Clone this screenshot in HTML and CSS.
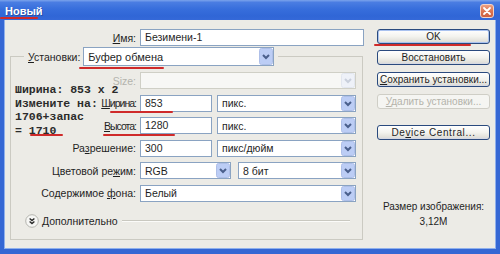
FILE: index.html
```html
<!DOCTYPE html>
<html lang="ru">
<head>
<meta charset="utf-8">
<title>Новый</title>
<link rel="stylesheet" href="styles.css">
</head>
<body>
<div class="window">
  <div class="titlebar">
    <span class="title">Новый</span>
    <span class="close"><svg width="14" height="14" viewBox="0 0 14 14"><path d="M4 4 L10 10 M10 4 L4 10" stroke="#fff" stroke-width="1.8" stroke-linecap="round"/></svg></span>
  </div>
  <div class="frame">
    <div class="content">
      <div class="main">
        <div class="name-row">
          <span class="lbl name-lbl"><u>И</u>мя:</span>
          <div class="field name-field">Безимени-1</div>
        </div>
        <fieldset class="group">
          <legend class="preset">
            <span class="lbl"><u>У</u>становки:</span>
            <div class="combo preset-combo"><span class="val">Буфер обмена</span><span class="arrow"><svg width="14" height="17" viewBox="0 0 14 17"><rect x="0.5" y="0.5" width="13" height="16" rx="2" fill="#bccdf5" stroke="#aebfe8"/><path d="M4 7 L7 10 L10 7" fill="none" stroke="#4a5f8c" stroke-width="2"/></svg></span></div>
          </legend>
          <div class="grid">
            <span class="lbl dim">Size:</span>
            <div class="combo disabled"><span class="val"></span><span class="arrow"><svg width="14" height="15" viewBox="0 0 14 15"><rect x="0.5" y="0.5" width="13" height="14" rx="2" fill="#eef1f8" stroke="#e2e6ef"/><path d="M4 6 L7 9 L10 6" fill="none" stroke="#c9cfdc" stroke-width="2"/></svg></span></div>

            <span class="lbl tight"><u>Ш</u>ирина:</span>
            <div class="pair">
              <div class="field num">853</div>
              <div class="combo unit"><span class="val">пикс.</span><span class="arrow"><svg width="14" height="15" viewBox="0 0 14 15"><rect x="0.5" y="0.5" width="13" height="14" rx="2" fill="#bccdf5" stroke="#aebfe8"/><path d="M4 6 L7 9 L10 6" fill="none" stroke="#4a5f8c" stroke-width="2"/></svg></span></div>
            </div>

            <span class="lbl tight"><u>В</u>ысота:</span>
            <div class="pair">
              <div class="field num">1280</div>
              <div class="combo unit"><span class="val">пикс.</span><span class="arrow"><svg width="14" height="15" viewBox="0 0 14 15"><rect x="0.5" y="0.5" width="13" height="14" rx="2" fill="#bccdf5" stroke="#aebfe8"/><path d="M4 6 L7 9 L10 6" fill="none" stroke="#4a5f8c" stroke-width="2"/></svg></span></div>
            </div>

            <span class="lbl">Ра<u>з</u>решение:</span>
            <div class="pair">
              <div class="field num">300</div>
              <div class="combo unit"><span class="val">пикс/дюйм</span><span class="arrow"><svg width="14" height="15" viewBox="0 0 14 15"><rect x="0.5" y="0.5" width="13" height="14" rx="2" fill="#bccdf5" stroke="#aebfe8"/><path d="M4 6 L7 9 L10 6" fill="none" stroke="#4a5f8c" stroke-width="2"/></svg></span></div>
            </div>

            <span class="lbl">Цветовой ре<u>ж</u>им:</span>
            <div class="pair wide-gap">
              <div class="combo mode"><span class="val">RGB</span><span class="arrow"><svg width="14" height="15" viewBox="0 0 14 15"><rect x="0.5" y="0.5" width="13" height="14" rx="2" fill="#bccdf5" stroke="#aebfe8"/><path d="M4 6 L7 9 L10 6" fill="none" stroke="#4a5f8c" stroke-width="2"/></svg></span></div>
              <div class="combo unit"><span class="val">8 бит</span><span class="arrow"><svg width="14" height="15" viewBox="0 0 14 15"><rect x="0.5" y="0.5" width="13" height="14" rx="2" fill="#bccdf5" stroke="#aebfe8"/><path d="M4 6 L7 9 L10 6" fill="none" stroke="#4a5f8c" stroke-width="2"/></svg></span></div>
            </div>

            <span class="lbl">Содержимое <u>ф</u>она:</span>
            <div class="combo"><span class="val">Белый</span><span class="arrow"><svg width="14" height="15" viewBox="0 0 14 15"><rect x="0.5" y="0.5" width="13" height="14" rx="2" fill="#bccdf5" stroke="#aebfe8"/><path d="M4 6 L7 9 L10 6" fill="none" stroke="#4a5f8c" stroke-width="2"/></svg></span></div>
          </div>
          <div class="advanced">
            <svg class="adv-icon" width="14" height="14" viewBox="0 0 14 14"><circle cx="7" cy="7" r="6.3" fill="#f6f6f4" stroke="#b4b4ae"/><path d="M4.6 4.4 L7 6.6 L9.4 4.4 M4.6 7.4 L7 9.6 L9.4 7.4" fill="none" stroke="#2a2a2a" stroke-width="1.3"/></svg>
            <span class="adv-text">Дополнительно</span>
            <span class="adv-line"></span>
          </div>
        </fieldset>
      </div>
      <div class="side">
        <div class="btn default">OK</div>
        <div class="btn b-restore">Восстановить</div>
        <div class="btn b-save"><u>С</u>охранить установки...</div>
        <div class="btn b-del disabled"><u>У</u>далить установки...</div>
        <div class="btn b-device">De<u>v</u>ice Central...</div>
        <div class="info">
          <div>Размер изображения:</div>
          <div>3,12M</div>
        </div>
      </div>
    </div>
  </div>
  <div class="notes">Ширина: 853 x 2<br>Измените на:<br>1706+запас<br>= 1710</div>
  <i class="mark m-title"></i>
  <i class="mark m-preset"></i>
  <i class="mark m-ok"></i>
  <i class="mark m-width"></i>
  <i class="mark m-height"></i>
  <i class="mark m-1710"></i>
</div>
</body>
</html>
```
FILE: styles.css
```css
* { box-sizing: border-box; }
html, body { margin: 0; padding: 0; }
body {
  width: 500px; height: 254px; overflow: hidden;
  font-family: "Liberation Sans", Arial, sans-serif;
  font-size: 10.5px; color: #1f1f1f;
  background: #ecebe6;
}
u { text-decoration: underline; text-underline-offset: 1px; }

.window {
  position: relative;
  width: 500px; height: 254px;
  display: flex; flex-direction: column;
  background: #ecebe6;
}

.titlebar {
  height: 20px; flex: none;
  display: flex; align-items: center; justify-content: space-between;
  padding: 0 6px 0 5px;
  background: linear-gradient(#7ba3ec 0%, #4a7de2 12%, #376edc 45%, #3066d6 80%, #3569d8 100%);
}
.title {
  color: #fff; font-weight: bold; font-size: 11px;
  text-shadow: 1px 1px 0 #2a4fa5;
  padding-top: 2px;
}
.close {
  width: 14px; height: 14px; margin-top: 2px;
  border: 1px solid #f3d2c6; border-radius: 3px;
  background: linear-gradient(#eca083, #dc7552 50%, #cc5f40);
  display: flex; align-items: center; justify-content: center;
}
.close svg { display: block; margin: -1px; }

.frame {
  flex: 1;
  border: solid #3567d4;
  border-width: 0 4px 5px 4px;
  box-shadow: inset 1px 0 0 #8fb0ec, inset -1px 0 0 #8fb0ec, inset 0 -1px 0 #8fb0ec;
}
.content {
  display: flex; gap: 13px;
  padding: 9px 6px 0 6px;
}

.main { width: 354px; flex: none; }
.lbl { text-align: right; white-space: nowrap; }
.lbl.tight { letter-spacing: -1px; }
.dim { color: #b3b3ad; }

.name-row { display: flex; gap: 4px; height: 17px; align-items: center; }
.name-lbl { width: 126px; }

.field {
  height: 17px; background: #fff;
  border: 1px solid #8aa3c2;
  padding: 0 4px; line-height: 15px; white-space: nowrap;
}
.name-field { width: 224px; }
.num { width: 72px; flex: none; }

.combo {
  height: 17px; background: #fff;
  border: 1px solid #8aa3c2;
  display: flex; align-items: center; justify-content: space-between;
  padding-left: 4px; white-space: nowrap;
}
.combo .arrow { display: flex; }
.combo .arrow svg { display: block; }
.combo.disabled { background: #f7f7f5; border-color: #cfcfc6; }

.group {
  margin: 1px 0 0 0;
  width: 353px; min-width: 0;
  border: 1px solid #cbcac2;
  padding: 6px 6px 10px 13px;
}
.preset {
  padding: 0 4px;
  display: flex; align-items: center; gap: 3px;
}
.preset-combo { width: 191px; height: 19px; font-size: 11px; }

.grid {
  display: grid;
  grid-template-columns: 112px 216px;
  grid-auto-rows: 17px;
  column-gap: 4px; row-gap: 5.5px;
  align-items: center;
}
.pair { display: flex; gap: 5px; }
.pair.wide-gap { gap: 7px; }
.unit { flex: 1; }
.mode { width: 91px; flex: none; }

.advanced {
  margin: 12px 6px 0 1px;
  height: 15px;
  display: flex; align-items: center;
}
.adv-icon { display: block; flex: none; }
.adv-text { margin-left: 3px; }
.adv-line {
  flex: 1; margin-left: 4px; height: 2px;
  border-top: 1px solid #c9c8c0; border-bottom: 1px solid #fbfbf9;
}

.side { width: 113px; flex: none; display: flex; flex-direction: column; }
.btn {
  height: 15px; font-size: 10px; line-height: 13px; text-align: center;
  border: 1px solid #2a4a7e; border-radius: 3px;
  background: linear-gradient(#ffffff, #f3f3ee 50%, #e2e1da 85%, #d2d6e4);
  color: #1f1f1f; white-space: nowrap;
}
.btn.default {
  box-shadow: inset 0 0 0 1px #a9c2ef;
}
.b-restore { margin-top: 6px; }
.b-save { margin-top: 7px; }
.b-del { margin-top: 7px; }
.b-device { margin-top: 16px; letter-spacing: 0.6px; }
.btn.disabled {
  border-color: #cfcec6; color: #b4b3ab;
  background: #f5f5f2;
}
.info {
  margin-top: 59px; text-align: center; line-height: 15px; font-size: 10px;
}

.notes {
  position: absolute; left: 15px; top: 83px;
  font-family: "Liberation Mono", "Courier New", monospace;
  font-weight: bold; font-size: 11.5px; line-height: 13.5px;
  color: #2b2b2b; white-space: nowrap;
}

.mark {
  position: absolute; height: 2px; background: #cf2a2a; border-radius: 1px;
}
.m-title { left: 0; top: 17px; width: 38px; }
.m-preset { left: 79px; top: 67px; width: 85px; }
.m-ok { left: 374px; top: 44px; width: 97px; }
.m-width { left: 110px; top: 111px; width: 63px; }
.m-height { left: 103px; top: 134px; width: 72px; }
.m-1710 { left: 30px; top: 134px; width: 33px; }
```
